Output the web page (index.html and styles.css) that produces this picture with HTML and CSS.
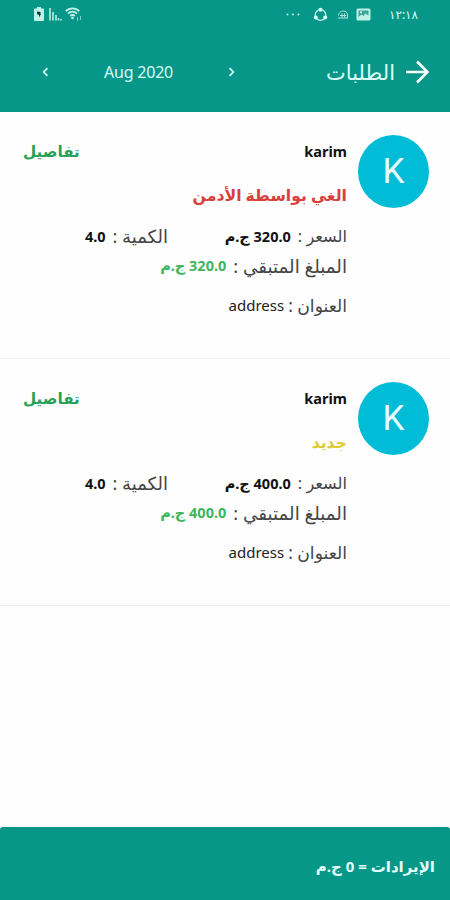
FILE: index.html
```
<!DOCTYPE html>
<html lang="ar" dir="rtl">
<head>
  <meta charset="UTF-8" />
  <title>الطلبات</title>
  <link rel="stylesheet" href="styles.css">
</head>
<body>
  <header>
    <div class="statusbar">
      <span class="clock">١٢:١٨</span>
      <svg class="ic-image" width="15" height="13" viewBox="0 0 15 13"><rect x=".5" y=".5" width="14" height="12" rx="1.5" fill="#bdf0e8"/><path d="M2.500 2.500h10v5L9.500 5.500l-2 2.500-2-1.500-3 2.500z" fill="#3aa698"/><circle cx="5" cy="4.300" r="1" fill="#e4fffb"/></svg>
      <svg class="ic-cloud" width="12" height="9" viewBox="0 0 12 9"><path d="M1 8h10M1.500 5.500C2 2 4.500 1 6.500 1s4 1.500 4 4v3M3 5.500h6M5 3.500v4M7.500 3.500v4" fill="none" stroke="#b3e6df"/></svg>
      <svg class="ic-share" width="15" height="15" viewBox="0 0 15 15"><circle cx="7.500" cy="8" r="5.300" fill="none" stroke="#c9f3ed" stroke-width="1.300"/><g fill="#d9fffa"><circle cx="7.500" cy="2.700" r="2"/><circle cx="2.800" cy="10.500" r="2"/><circle cx="12.200" cy="10.500" r="2"/></g></svg>
      <svg class="ic-dots" width="14" height="3" viewBox="0 0 14 3"><g fill="#c5f2ec"><circle cx="1.500" cy="1.500" r="1"/><circle cx="7" cy="1.500" r="1"/><circle cx="12.500" cy="1.500" r="1"/></g></svg>
      <span class="spacer"></span>
      <svg class="ic-wifi" width="18" height="15" viewBox="0 0 18 15"><g fill="none" stroke="#c3f1ea" stroke-width="1.800"><path d="M.8 4.200C4.500.3 10.500.3 14.200 4.200"/><path d="M3 6.700c2.700-2.600 6.300-2.600 9 0"/><path d="M5.200 9c1.400-1.300 3.200-1.300 4.600 0"/></g><circle cx="7.500" cy="11" r="1.300" fill="#c3f1ea"/><path d="M12.500 10v4M15.500 9v4" stroke="#7fcfc5"/></svg>
      <svg class="ic-signal" width="13" height="13" viewBox="0 0 13 13"><path d="M1 0v12.500M4 4v8.500M7 7v5.500M9.500 10v2.500M12 11v1.500" stroke="#a9e2da" stroke-width="1.800"/></svg>
      <svg class="ic-battery" width="10" height="14" viewBox="0 0 10 14"><path d="M3 0h4v1.500h2q1 0 1 1V13q0 1-1 1H1q-1 0-1-1V2.500q0-1 1-1h2z" fill="#c3f1ea"/><path d="M3 4.500l3.500.5v2H7L5 10.500V8L3 7z" fill="#123c38"/></svg>
    </div>
    <div class="toolbar">
      <svg class="back" width="23" height="24" viewBox="0 0 23 24"><path d="M0 12h21M11 1.500L21.500 12 11 22.500" fill="none" stroke="#fff" stroke-width="2.600"/></svg>
      <h1>الطلبات</h1>
      <div class="month">
        <svg width="7" height="10" viewBox="0 0 7 10"><path d="M1.500 1.200L5.300 5 1.500 8.800" fill="none" stroke="#d9fffa" stroke-width="1.700"/></svg>
        <span class="month-name" dir="ltr">Aug 2020</span>
        <svg width="7" height="10" viewBox="0 0 7 10"><path d="M5.500 1.200L1.700 5l3.800 3.800" fill="none" stroke="#d9fffa" stroke-width="1.700"/></svg>
      </div>
    </div>
  </header>

  <main>
    <div class="order">
      <div class="avatar">K</div>
      <div class="info">
        <div class="row top"><b class="name">karim</b><b class="details">تفاصيل</b></div>
        <div class="row state cancelled">الغي بواسطة الأدمن</div>
        <div class="row">
          <div class="price"><span class="label">السعر :</span><b class="value">320.0 ج.م</b></div>
          <div class="qty"><span class="label">الكمية :</span><b class="value">4.0</b></div>
        </div>
        <div class="row rest"><span class="label">المبلغ المتبقي :</span><b class="value green">320.0 ج.م</b></div>
        <div class="row address"><span class="label">العنوان :</span><span class="street">address</span></div>
      </div>
    </div>

    <div class="order">
      <div class="avatar">K</div>
      <div class="info">
        <div class="row top"><b class="name">karim</b><b class="details">تفاصيل</b></div>
        <div class="row state new">جديد</div>
        <div class="row">
          <div class="price"><span class="label">السعر :</span><b class="value">400.0 ج.م</b></div>
          <div class="qty"><span class="label">الكمية :</span><b class="value">4.0</b></div>
        </div>
        <div class="row rest"><span class="label">المبلغ المتبقي :</span><b class="value green">400.0 ج.م</b></div>
        <div class="row address"><span class="label">العنوان :</span><span class="street">address</span></div>
      </div>
    </div>
  </main>

  <footer>الإيرادات = 0 ج.م</footer>
</body>
</html>
```
FILE: styles.css
```
* {
  box-sizing: border-box;
}
body {
  margin: 0;
  height: 900px;
  display: flex;
  flex-direction: column;
  background: #fefefe;
  color: #222;
  font-family: "Noto Sans", "DejaVu Sans", sans-serif;
  overflow: hidden;
}
svg {
  display: block;
  flex: none;
}
header {
  height: 112px;
  background: #069788;
  color: #d9fffa;
}
.statusbar {
  display: flex;
  align-items: center;
  height: 28px;
  padding: 0 32px 0 34px;
}
.clock {
  width: 29px;
  margin-left: 18px;
  font-size: 12px;
  white-space: nowrap;
}
.ic-image {
  margin-left: 7px;
}
.ic-cloud {
  margin-left: 9px;
}
.ic-share {
  margin-left: 13px;
}
.spacer {
  flex: 1;
}
.ic-wifi {
  margin-left: 3px;
}
.ic-signal {
  margin-left: 5px;
}
.toolbar {
  display: flex;
  align-items: center;
  height: 88px;
  padding: 0 21px 0 42px;
}
h1 {
  width: 69px;
  margin: 0 11px 0 91px;
  font-size: 21px;
  font-weight: normal;
  line-height: 26px;
  white-space: nowrap;
}
.month {
  flex: 1;
  display: flex;
  align-items: center;
  justify-content: space-between;
}
.month-name {
  font-size: 16px;
  letter-spacing: -0.2px;
}
.order {
  display: flex;
  height: 247px;
  padding: 23px 21px 0 23px;
  border-bottom: 1px solid #eee;
}
.avatar {
  width: 71px;
  height: 73px;
  margin-left: 11px;
  border-radius: 50%;
  background: #00bcd6;
  color: #e8fdff;
  font-family: Roboto, sans-serif;
  font-size: 35px;
  line-height: 73px;
  text-align: center;
}
.info {
  flex: 1;
  padding-top: 2px;
  font-size: 14.5px;
}
.row {
  display: flex;
  height: 29px;
  line-height: 29px;
  white-space: nowrap;
}
.price,
.qty {
  display: flex;
}
.top {
  justify-content: space-between;
}
.name {
  color: #111;
  font-size: 14.5px;
}
.details {
  color: #27a058;
  font-size: 15.2px;
}
.state {
  height: 27px;
  margin: 15px 0 14px;
  font-size: 15.7px;
  font-weight: bold;
}
.cancelled {
  color: #d8403b;
}
.new {
  color: #dccb30;
}
.label {
  margin-left: 7px;
  color: #444;
  font-size: 16.2px;
}
.qty .label {
  font-size: 18px;
}
.rest .label {
  font-size: 18.3px;
}
.value {
  color: #111;
}
.green {
  color: #3fb65c;
}
.price {
  width: 179px;
}
.address {
  margin-top: 11px;
}
.address .label {
  margin-left: 4px;
  font-size: 17.2px;
}
.street {
  font-size: 15px;
}
footer {
  height: 73px;
  margin-top: auto;
  padding: 0 15px;
  border-radius: 3px 3px 0 0;
  background: #069788;
  color: #e2fffb;
  font-size: 15px;
  font-weight: bold;
  line-height: 79px;
}
```
